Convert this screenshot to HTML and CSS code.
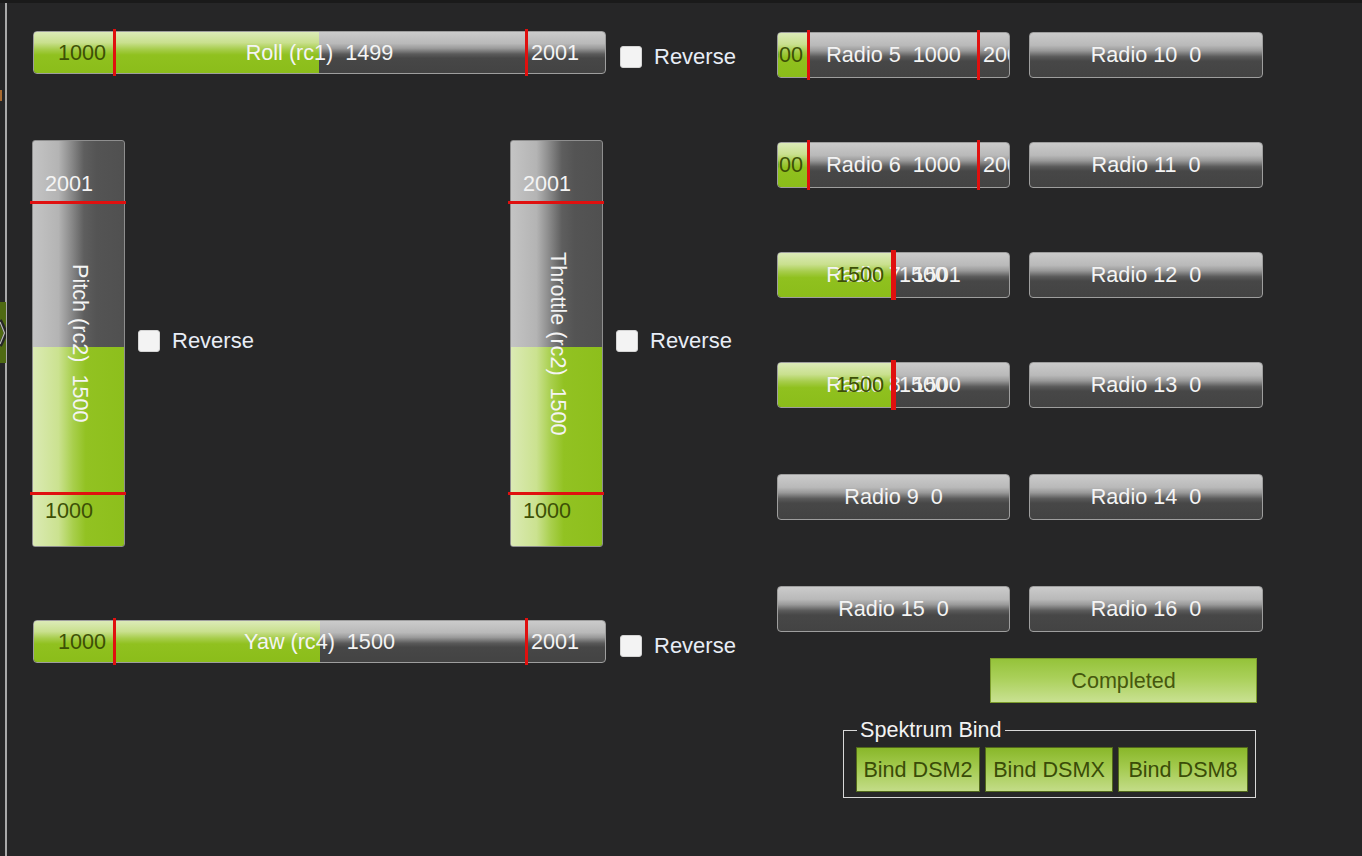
FILE: index.html
```html
<!DOCTYPE html>
<html>
<head>
<meta charset="utf-8">
<link rel="stylesheet" href="styles.css">
</head>
<body>
<div class="topbar"></div>
<svg class="handle" width="6" height="61" viewBox="0 0 6 61"><rect width="6" height="61" fill="#4f6a12"/><path d="M0 18 L6 31 L0 44" stroke="#262626" stroke-width="4" fill="none"/><path d="M0 20 L4.5 31 L0 42" stroke="#b8b8b8" stroke-width="1.2" fill="none"/></svg>
<span class="orange"></span>
<div class="main">
  <div class="splitter"></div>
  <div class="left">
    <div class="hrow">
      <div class="hbar">
        <div class="clip">
          <div class="fill" style="width:285px"></div>
          <span class="lbl main-lbl">Roll (rc1)  1499</span>
          <span class="lbl min-lbl" style="width:72px">1000</span>
          <span class="lbl max-lbl" style="left:497px">2001</span>
        </div>
        <i class="mark" style="left:80px"></i>
        <i class="mark" style="left:492px"></i>
      </div>
      <label class="check"><span class="box"></span>Reverse</label>
    </div>

    <div class="vrow">
      <div class="vgroup">
        <div class="vbar">
          <div class="clip vclip">
            <div class="vfill" style="height:199px"></div>
            <span class="vmain">Pitch (rc2)  1500</span>
            <span class="vlbl vmax">2001</span>
            <span class="vlbl vmin">1000</span>
          </div>
          <i class="hmark" style="top:61px"></i>
          <i class="hmark" style="top:352px"></i>
        </div>
        <label class="check vcheck"><span class="box"></span>Reverse</label>
      </div>
      <div class="vgroup">
        <div class="vbar">
          <div class="clip vclip">
            <div class="vfill" style="height:199px"></div>
            <span class="vmain">Throttle (rc2)  1500</span>
            <span class="vlbl vmax">2001</span>
            <span class="vlbl vmin">1000</span>
          </div>
          <i class="hmark" style="top:61px"></i>
          <i class="hmark" style="top:352px"></i>
        </div>
        <label class="check vcheck"><span class="box"></span>Reverse</label>
      </div>
    </div>

    <div class="hrow yaw">
      <div class="hbar">
        <div class="clip">
          <div class="fill" style="width:286px"></div>
          <span class="lbl main-lbl">Yaw (rc4)  1500</span>
          <span class="lbl min-lbl" style="width:72px">1000</span>
          <span class="lbl max-lbl" style="left:497px">2001</span>
        </div>
        <i class="mark" style="left:80px"></i>
        <i class="mark" style="left:492px"></i>
      </div>
      <label class="check"><span class="box"></span>Reverse</label>
    </div>
  </div>

  <div class="right">
    <div class="grid">
      <div class="rbar">
        <div class="clip">
          <div class="fill" style="width:30px"></div>
          <span class="lbl main-lbl">Radio 5  1000</span>
          <span class="lbl min-lbl" style="width:25px">1000</span>
          <span class="lbl max-lbl" style="left:205px">2001</span>
        </div>
        <i class="mark" style="left:30px"></i>
        <i class="mark" style="left:200px"></i>
      </div>
      <div class="rbar"><div class="clip"><span class="lbl main-lbl">Radio 10  0</span></div></div>

      <div class="rbar">
        <div class="clip">
          <div class="fill" style="width:30px"></div>
          <span class="lbl main-lbl">Radio 6  1000</span>
          <span class="lbl min-lbl" style="width:25px">1000</span>
          <span class="lbl max-lbl" style="left:205px">2001</span>
        </div>
        <i class="mark" style="left:30px"></i>
        <i class="mark" style="left:200px"></i>
      </div>
      <div class="rbar"><div class="clip"><span class="lbl main-lbl">Radio 11  0</span></div></div>

      <div class="rbar">
        <div class="clip">
          <div class="fill" style="width:117px"></div>
          <span class="lbl main-lbl">Radio 7  1501</span>
          <span class="lbl min-lbl" style="width:106px">1500</span>
          <span class="lbl max-lbl" style="left:121px">1500</span>
        </div>
        <i class="mark" style="left:114px"></i>
        <i class="mark" style="left:116px"></i>
      </div>
      <div class="rbar"><div class="clip"><span class="lbl main-lbl">Radio 12  0</span></div></div>

      <div class="rbar">
        <div class="clip">
          <div class="fill" style="width:117px"></div>
          <span class="lbl main-lbl">Radio 8  1500</span>
          <span class="lbl min-lbl" style="width:106px">1500</span>
          <span class="lbl max-lbl" style="left:121px">1500</span>
        </div>
        <i class="mark" style="left:114px"></i>
        <i class="mark" style="left:116px"></i>
      </div>
      <div class="rbar"><div class="clip"><span class="lbl main-lbl">Radio 13  0</span></div></div>

      <div class="rbar"><div class="clip"><span class="lbl main-lbl">Radio 9  0</span></div></div>
      <div class="rbar"><div class="clip"><span class="lbl main-lbl">Radio 14  0</span></div></div>

      <div class="rbar"><div class="clip"><span class="lbl main-lbl">Radio 15  0</span></div></div>
      <div class="rbar"><div class="clip"><span class="lbl main-lbl">Radio 16  0</span></div></div>
    </div>

    <div class="done">Completed</div>

    <fieldset class="bind">
      <legend>Spektrum Bind</legend>
      <div class="bind-row">
        <div class="bbtn b1">Bind DSM2</div>
        <div class="bbtn b2">Bind DSMX</div>
        <div class="bbtn b3">Bind DSM8</div>
      </div>
    </fieldset>
  </div>
</div>
</body>
</html>
```

FILE: styles.css
```css
html, body {
  margin: 0;
  padding: 0;
}
body {
  position: relative;
  width: 1362px;
  height: 856px;
  overflow: hidden;
  background: #262627;
  font-family: "Liberation Sans", Arial, sans-serif;
  font-size: 21.6px;
  color: #f2f2f2;
}
.topbar {
  height: 3px;
  background: #1a1a1a;
}
.handle {
  position: absolute;
  left: 0;
  top: 302px;
}
.orange {
  position: absolute;
  left: 0;
  top: 90px;
  width: 2px;
  height: 11px;
  background: #a86a30;
}
.main {
  display: flex;
  height: 853px;
}
.splitter {
  flex: none;
  width: 2px;
  margin-left: 5px;
  background: #a9a9a9;
}
.left {
  flex: none;
  width: 744px;
  margin-left: 26px;
  padding-top: 28px;
  box-sizing: border-box;
}
.hrow {
  display: flex;
  align-items: flex-start;
}
.hrow.yaw {
  margin-top: 73px;
}
.hbar {
  position: relative;
  flex: none;
  width: 573px;
  height: 43px;
}
.rbar {
  position: relative;
  height: 46px;
}
.clip {
  position: absolute;
  inset: 0;
  overflow: hidden;
  box-sizing: border-box;
  border: 1px solid #9e9e9e;
  border-radius: 4px;
  background: linear-gradient(to bottom, #cbcbcb 0%, #b9b9b9 28%, #9a9a9a 40%, #5a5a5a 54%, #474747 64%, #434343 100%);
}
.fill {
  position: absolute;
  left: 0;
  top: 0;
  bottom: 0;
  background: linear-gradient(to bottom, #dcebb8 0%, #c9e08e 26%, #a7cd4c 42%, #90c11f 56%, #8bbd1a 100%);
}
.lbl {
  position: absolute;
  top: 0;
  bottom: 0;
  display: flex;
  align-items: center;
  white-space: pre;
}
.main-lbl {
  left: 0;
  right: 0;
  justify-content: center;
  color: #f4f4f4;
}
.min-lbl {
  left: 0;
  justify-content: flex-end;
  color: #3d5006;
}
.max-lbl {
  color: #f4f4f4;
}
.mark {
  position: absolute;
  top: -2px;
  bottom: -2px;
  width: 3px;
  background: #e0100f;
}

/* vertical bars */
.vrow {
  display: grid;
  grid-template-columns: 478px auto;
  margin-top: 66px;
  margin-left: -1px;
}
.vgroup {
  display: flex;
  align-items: center;
}
.vbar {
  position: relative;
  flex: none;
  width: 93px;
  height: 407px;
}
.vclip {
  border-radius: 3px;
  border-color: #8e8e8e;
  background: linear-gradient(to right, #c4c4c4 0%, #b4b4b4 28%, #8a8a8a 42%, #5e5e5e 56%, #545454 70%, #505050 100%);
}
.vfill {
  position: absolute;
  left: 0;
  right: 0;
  bottom: 0;
  background: linear-gradient(to right, #dbeab4 0%, #cbe290 28%, #a8cf4c 44%, #92c222 58%, #8dbf1c 100%);
}
.vmain {
  position: absolute;
  inset: 0;
  display: flex;
  justify-content: center;
  align-items: center;
  writing-mode: vertical-rl;
  white-space: pre;
  color: #f4f4f4;
  padding-left: 2px;
}
.vlbl {
  position: absolute;
  left: 12px;
  line-height: 24px;
}
.vmax {
  top: 31px;
  color: #f4f4f4;
}
.vmin {
  top: 358px;
  color: #3d5006;
}
.hmark {
  position: absolute;
  left: -2px;
  right: -1px;
  height: 3px;
  background: #e0100f;
}

/* checkbox */
.check {
  display: flex;
  align-items: center;
  margin-left: 14px;
  margin-top: 15px;
  font-size: 22px;
  line-height: 22px;
  color: #e8edf6;
}
.vcheck {
  margin-left: 13px;
  margin-top: -5px;
}
.box {
  flex: none;
  width: 22px;
  height: 22px;
  box-sizing: border-box;
  border: 1px solid #d4d4d4;
  border-radius: 3px;
  background: #f3f3f3;
  margin-right: 12px;
}

/* right column */
.right {
  flex: none;
  width: 486px;
  padding-top: 29px;
  box-sizing: border-box;
}
.grid {
  display: grid;
  grid-template-columns: 233px 234px;
  grid-template-rows: 46px 46px 46px 46px 48px 48px;
  column-gap: 19px;
  row-gap: 64px;
  align-items: end;
}
.done {
  margin-top: 26px;
  margin-left: 213px;
  width: 267px;
  height: 45px;
  box-sizing: border-box;
  border: 1px solid #7c9c2c;
  background: linear-gradient(to bottom, #95c33a 0%, #aad05a 45%, #c9e192 100%);
  color: #46580e;
  display: flex;
  align-items: center;
  justify-content: center;
}
.bind {
  margin: 15px 0 0 66px;
  width: 413px;
  box-sizing: border-box;
  border: 1px solid #d8d8d8;
  padding: 5px 7px 5px 12px;
  min-width: 0;
}
.bind legend {
  padding: 0 3px;
  margin-left: 1px;
  line-height: 24px;
  color: #f2f2f2;
}
.bind-row {
  display: flex;
  gap: 5px;
}
.bbtn {
  flex: none;
  height: 45px;
  box-sizing: border-box;
  border: 1px solid #51681a;
  background: linear-gradient(to bottom, #89b72a 0%, #a3ca4e 45%, #c3dc88 100%);
  color: #3a4c08;
  display: flex;
  align-items: center;
  justify-content: center;
  white-space: nowrap;
}
.b1 { width: 124px; }
.b2 { width: 128px; }
.b3 { width: 130px; }
```
